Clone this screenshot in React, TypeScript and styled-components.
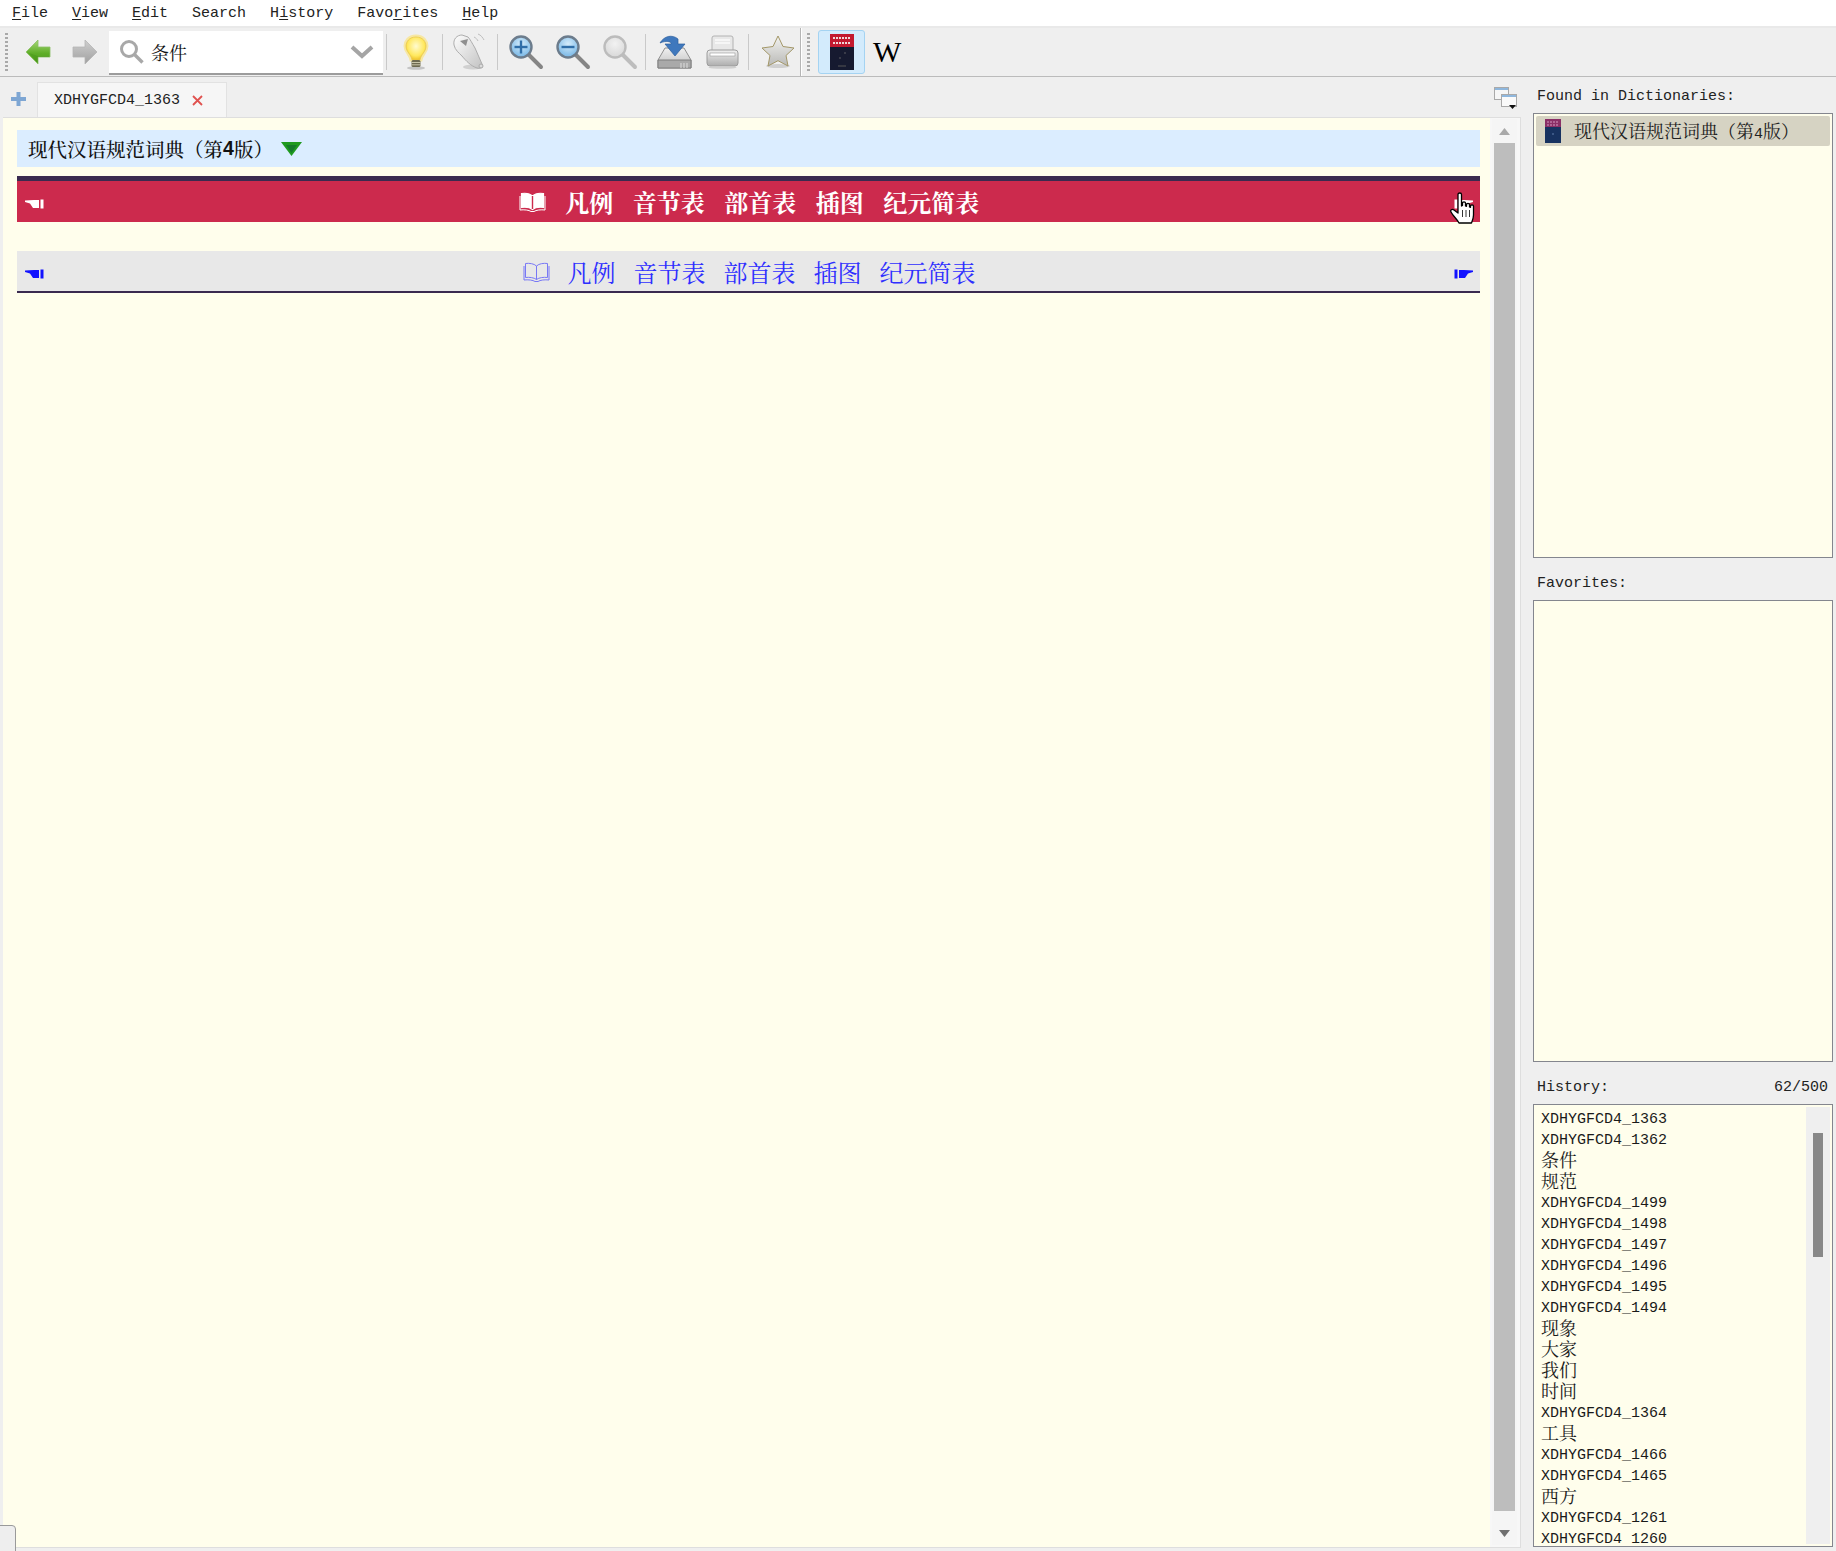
import React from "react";
import styled, { createGlobalStyle } from "styled-components";

const CJK = `"Noto Serif CJK SC", "Noto Sans CJK SC", serif`;
const MONO = `"Liberation Mono", "Noto Sans CJK SC", monospace`;

const Global = createGlobalStyle`
  html, body { margin: 0; padding: 0; background: #efefef; }
  * { box-sizing: border-box; }
`;

const Page = styled.div`
  width: 1836px;
  height: 1551px;
  position: relative;
  overflow: hidden;
  display: flex;
  flex-direction: column;
  background: #efefef;
  font-family: ${MONO};
  font-size: 15px;
  color: #111;
`;

const MenuBar = styled.div`
  height: 28px;
  flex: none;
  display: flex;
  gap: 24px;
  padding: 5px 0 0 12px;
  background: #fff;
  border-bottom: 2px solid #e9e9e9;
  line-height: 18px;
  color: #222;
`;

const MenuItem = styled.span`
  u { text-underline-offset: 2px; }
`;

const Toolbar = styled.div`
  height: 49px;
  flex: none;
  display: flex;
  align-items: center;
  padding-left: 5px;
  border-bottom: 1px solid #bbb;
  background: #efefef;
`;

const Grip = styled.div<{ $ml?: number }>`
  width: 3px;
  height: 38px;
  flex: none;
  margin-left: ${(p) => p.$ml ?? 0}px;
  background: repeating-linear-gradient(to bottom, #a9a9a9 0 2px, transparent 2px 4px);
`;

const Slot = styled.div<{ $w: number; $ml: number }>`
  width: ${(p) => p.$w}px;
  margin-left: ${(p) => p.$ml}px;
  flex: none;
  display: flex;
  align-items: center;
  justify-content: center;
`;

const Sep = styled.div<{ $ml: number }>`
  width: 1px;
  height: 36px;
  flex: none;
  margin-left: ${(p) => p.$ml}px;
  background: #c9c9c9;
`;

const Break = styled.div<{ $ml: number }>`
  width: 2px;
  height: 48px;
  flex: none;
  margin-left: ${(p) => p.$ml}px;
  border-left: 1px solid #b5b5b5;
  background: #fff;
`;

const Combo = styled.div`
  width: 274px;
  height: 44px;
  flex: none;
  margin-left: 11px;
  margin-top: 1px;
  display: flex;
  align-items: center;
  padding: 0 9px 0 10px;
  background: #fff;
  border-bottom: 2px solid #9c9c9c;
`;

const ComboText = styled.span`
  flex: 1;
  margin-left: 7px;
  font-family: ${CJK};
  font-size: 18px;
  color: #111;
`;

const DictButton = styled.div`
  width: 47px;
  height: 44px;
  flex: none;
  margin-left: 8px;
  display: flex;
  align-items: center;
  justify-content: center;
  background: #d3ebfc;
  border: 1px solid #a4d3f2;
  border-radius: 3px;
`;

const WikiMark = styled.span`
  margin-left: 8px;
  width: 31px;
  flex: none;
  font-family: "Liberation Serif", serif;
  font-size: 30px;
  line-height: 44px;
  color: #000;
`;

const Body = styled.div`
  flex: 1;
  min-height: 0;
  display: flex;
`;

const LeftColumn = styled.div`
  width: 1521px;
  flex: none;
  display: flex;
  flex-direction: column;
`;

const TabRow = styled.div`
  height: 40px;
  flex: none;
  display: flex;
  align-items: flex-end;
  padding-left: 11px;
`;

const PlusSlot = styled.div`
  width: 15px;
  height: 35px;
  margin-right: 11px;
  display: flex;
  align-items: center;
  padding-bottom: 1px;
`;

const Tab = styled.div`
  width: 190px;
  height: 35px;
  display: flex;
  align-items: center;
  padding-left: 16px;
  background: #f6f6f6;
  border: 1px solid #e2e2e2;
  border-bottom: none;
  color: #222;
`;

const TabClose = styled.span`
  margin-left: 12px;
  display: flex;
`;

const TabSwitch = styled.div`
  margin-left: auto;
  margin-right: 4px;
  align-self: center;
  padding-top: 2px;
  display: flex;
`;

const Frame = styled.div`
  flex: 1;
  min-height: 0;
  margin: 0 0 3px 3px;
  display: flex;
  gap: 2px;
  padding-right: 3px;
  border: 1px solid #dedede;
  border-left: none;
  background: #f7f7f7;
`;

const Article = styled.div`
  flex: 1;
  min-width: 0;
  padding: 12px 10px 0 14px;
  background: #fffeec;
`;

const DictHead = styled.div`
  height: 37px;
  display: flex;
  align-items: center;
  padding-left: 11px;
  background: #dbedff;
  font-family: ${CJK};
  font-size: 19.5px;
  font-weight: 500;
  color: #111;
  b { font-family: "Liberation Sans", sans-serif; }
`;

const DictArrow = styled.span`
  margin-left: 8px;
  display: flex;
`;

const NavBar = styled.div<{ $kind: "red" | "gray" }>`
  position: relative;
  height: ${(p) => (p.$kind === "red" ? 46 : 42)}px;
  margin-top: ${(p) => (p.$kind === "red" ? 9 : 29)}px;
  display: flex;
  align-items: center;
  justify-content: space-between;
  padding: 0 7px 0 8px;
  font-family: ${CJK};
  background: ${(p) => (p.$kind === "red" ? "#cc2a4d" : "#e8e8e8")};
  color: ${(p) => (p.$kind === "red" ? "#fff" : "#2f2fff")};
  border-top: ${(p) => (p.$kind === "red" ? "5px solid #3a2a4f" : "none")};
  border-bottom: ${(p) => (p.$kind === "gray" ? "2px solid #3a2a4f" : "none")};
`;

const NavLinks = styled.div<{ $bold: boolean }>`
  display: flex;
  align-items: center;
  gap: ${(p) => (p.$bold ? 19.5 : 18)}px;
  font-size: 24px;
  font-weight: ${(p) => (p.$bold ? 700 : 400)};
  line-height: 32px;
  padding-top: ${(p) => (p.$bold ? 0 : 2)}px;
`;

const HandSlot = styled.span<{ $blue?: boolean }>`
  display: flex;
  margin-top: 5px;
  color: ${(p) => (p.$blue ? "#1212ff" : "inherit")};
`;

const Cursor = styled.span`
  position: absolute;
  right: 5px;
  top: 11px;
  display: flex;
`;

const ScrollTrack = styled.div`
  width: 25px;
  flex: none;
  margin-top: 1px;
  margin-bottom: 2px;
  display: flex;
  flex-direction: column;
  align-items: center;
  background: #f5f5f5;
`;

const ArrowCell = styled.div`
  height: 24px;
  flex: none;
  display: flex;
  align-items: center;
  justify-content: center;
`;

const ScrollThumb = styled.div`
  flex: 1;
  width: 21px;
  margin-bottom: 10px;
  background: #bdbdbd;
`;

const RightColumn = styled.div`
  width: 300px;
  flex: none;
  margin-left: 12px;
  display: flex;
  flex-direction: column;
`;

const PanelLabel = styled.div<{ $h: number; $top: number }>`
  height: ${(p) => p.$h}px;
  flex: none;
  padding: ${(p) => p.$top}px 5px 0 4px;
  display: flex;
  align-items: center;
  justify-content: space-between;
  color: #222;
`;

const ListBox = styled.div<{ $h: number }>`
  height: ${(p) => p.$h}px;
  flex: none;
  position: relative;
  border: 1px solid #84868e;
  background: #fffeec;
  padding: 2px;
  display: flex;
`;

const FoundRow = styled.div`
  width: 100%;
  height: 30px;
  display: flex;
  align-items: center;
  padding-left: 9px;
  background: #d6d3c3;
  border-radius: 2px;
  font-family: ${CJK};
  font-size: 18px;
  color: #222;
  span { font-family: ${MONO}; font-size: 15px; }
`;

const FoundText = styled.div`
  margin-left: 13px;
  margin-top: -3px;
  white-space: nowrap;
`;

const HistoryRows = styled.div`
  flex: 1;
  min-width: 0;
  overflow: hidden;
  padding: 2px 0 0 5px;
`;

const HistoryRow = styled.div`
  height: 21px;
  line-height: 21px;
  font-size: 15px;
  color: #1a1a1a;
  white-space: nowrap;
  font-family: ${MONO};
`;

const HistoryCjk = styled(HistoryRow)`
  font-family: ${CJK};
  font-size: 18px;
  line-height: 17px;
`;

const ListScroll = styled.div`
  width: 24px;
  flex: none;
  padding: 26px 7px 0;
  background: #efefef;
`;

const ListThumb = styled.div`
  height: 124px;
  background: #888;
`;

const Corner = styled.div`
  position: absolute;
  left: -4px;
  bottom: -4px;
  width: 20px;
  height: 30px;
  border: 1px solid #9a9a9a;
  border-radius: 4px;
  background: #eeeeee;
`;

const Back = () => (
  <svg width="26" height="26" viewBox="0 0 26 26">
    <defs>
      <linearGradient id="backG" x1="0" y1="0" x2="0" y2="1">
        <stop offset="0" stopColor="#a8d878" />
        <stop offset="0.55" stopColor="#5fae28" />
        <stop offset="1" stopColor="#4d9a1c" />
      </linearGradient>
    </defs>
    <path d="M1 13 13 1v7h12v10H13v7z" fill="url(#backG)" stroke="#8cbf66" strokeWidth="0.8" />
    <path d="M13 17h11v1H13v6L4 14z" fill="#3f8f14" opacity="0.35" />
  </svg>
);

const Forward = () => (
  <svg width="26" height="26" viewBox="0 0 26 26">
    <defs>
      <linearGradient id="fwdG" x1="0" y1="0" x2="0" y2="1">
        <stop offset="0" stopColor="#cfcfcf" />
        <stop offset="1" stopColor="#a0a0a0" />
      </linearGradient>
    </defs>
    <path d="M25 13 13 1v7H1v10h12v7z" fill="url(#fwdG)" stroke="#b5b5b5" strokeWidth="0.8" />
  </svg>
);

const SearchGlass = () => (
  <svg width="25" height="25" viewBox="0 0 25 25" fill="none" stroke="#a8a8a8">
    <circle cx="10" cy="10" r="7.5" strokeWidth="3" />
    <path d="M15.5 15.5 23.5 23.5" strokeWidth="3.4" />
  </svg>
);

const Chevron = () => (
  <svg width="24" height="15" viewBox="0 0 24 15" fill="none">
    <path d="M2 3 12 12 22 3" stroke="#a5a5a5" strokeWidth="4" />
  </svg>
);

const Bulb = () => (
  <svg width="30" height="36" viewBox="0 0 30 36">
    <defs>
      <radialGradient id="bulbG" cx="0.5" cy="0.4" r="0.6">
        <stop offset="0" stopColor="#fffbd0" />
        <stop offset="0.7" stopColor="#ffe85e" />
        <stop offset="1" stopColor="#efc22a" />
      </radialGradient>
    </defs>
    <ellipse cx="15" cy="34" rx="9" ry="1.8" fill="#c4c4c4" />
    <path d="M15 2C7 2 4 8 4 12c0 6 5 8 6 14h10c1-6 6-8 6-14 0-4-3-10-11-10z" fill="#fff2b0" stroke="#f7e7a2" strokeWidth="3" />
    <path d="M15 3C8 3 5 8 5 12c0 6 5 8 6 14h8c1-6 6-8 6-14 0-4-3-9-10-9z" fill="url(#bulbG)" stroke="#e9c94f" strokeWidth="0.8" />
    <rect x="10.500" y="26" width="9" height="7" rx="1.500" fill="#6e6a50" />
    <path d="M10.500 28.500h9M10.500 30.800h9" stroke="#c9c5a8" />
  </svg>
);

const Whistle = () => (
  <svg width="33" height="38" viewBox="0 0 33 38">
    <defs>
      <linearGradient id="whisG" x1="0" y1="0" x2="1" y2="1">
        <stop offset="0" stopColor="#fdfdfd" />
        <stop offset="1" stopColor="#c2c2c2" />
      </linearGradient>
    </defs>
    <ellipse cx="20" cy="34" rx="10" ry="2.500" fill="#d0d0d0" />
    <path d="M1 12C0 6 4 2 9 2l6 2c2 2 4 6 7 11l7 16c1 3-2 5-5 4-6-2-11-7-15-12-3-3-7-6-8-11z" fill="url(#whisG)" stroke="#adadad" />
    <path d="M7 8l8-2-2 7z" fill="#8f8f8f" />
    <path d="M21 4c2 1 3 2 4 4M25 1c3 1 5 4 6 6" fill="none" stroke="#bdbdbd" />
    <circle cx="28" cy="33" r="2" fill="#dcdcdc" stroke="#aaa" />
  </svg>
);

const Magnifier = ({ mark, off }: { mark?: "plus" | "minus"; off?: boolean }) => {
  const id = `lens${mark ?? "none"}`;
  return (
    <svg width="36" height="36" viewBox="0 0 36 36">
      <defs>
        <radialGradient id={id} cx="0.5" cy="0.35" r="0.7">
          <stop offset="0" stopColor={off ? "#f2f2f2" : "#d4ecfb"} />
          <stop offset="1" stopColor={off ? "#d6d6d6" : "#6fb2e4"} />
        </radialGradient>
      </defs>
      <path d="M21 21 33 33" stroke={off ? "#bdbdbd" : "#858585"} strokeWidth="4" strokeLinecap="round" />
      <circle cx="13" cy="13" r="10.500" fill={`url(#${id})`} stroke={off ? "#bcbcbc" : "#6c7c8c"} strokeWidth="2.400" />
      {mark && <path d="M6.500 13h13" stroke="#2f6ea8" strokeWidth="2.400" />}
      {mark === "plus" && <path d="M13 6.500v13" stroke="#2f6ea8" strokeWidth="2.400" />}
    </svg>
  );
};

const SaveDisk = () => (
  <svg width="35" height="36" viewBox="0 0 35 36">
    <defs>
      <linearGradient id="diskG" x1="0" y1="0" x2="0" y2="1">
        <stop offset="0" stopColor="#f0f0f0" />
        <stop offset="1" stopColor="#bdbdbd" />
      </linearGradient>
    </defs>
    <path d="M8 14h19l7 12v8H1v-8z" fill="url(#diskG)" stroke="#8f8f8f" />
    <path d="M1 26h33v8H1z" fill="#a9a9a9" stroke="#7f7f7f" />
    <path d="M24 34v-5M27 34v-5M30 34v-5" stroke="#dedede" />
    <path d="M3 9C7 2 15 0 21 5v5h7L18 22 8 10h6c1-2-4-4-11-1z" fill="#3f78bd" stroke="#2d5f9e" strokeWidth="0.7" />
  </svg>
);

const Printer = () => (
  <svg width="33" height="34" viewBox="0 0 33 34">
    <defs>
      <linearGradient id="prnG" x1="0" y1="0" x2="0" y2="1">
        <stop offset="0" stopColor="#f1f1f1" />
        <stop offset="1" stopColor="#adadad" />
      </linearGradient>
    </defs>
    <rect x="6" y="1" width="21" height="17" rx="2" fill="#e8e8e8" stroke="#b2b2b2" />
    <path d="M9 5h15M9 8h15" stroke="#fafafa" strokeWidth="1.500" />
    <rect x="1" y="15" width="31" height="16" rx="3" fill="url(#prnG)" stroke="#9c9c9c" />
    <rect x="4" y="18" width="25" height="3" fill="#fff" stroke="#9a9a9a" strokeWidth="0.6" />
    <ellipse cx="16.500" cy="32.500" rx="14" ry="1.300" fill="#cfcfcf" />
  </svg>
);

const Star = () => (
  <svg width="34" height="34" viewBox="0 0 34 34">
    <defs>
      <linearGradient id="starG" x1="0" y1="0" x2="0" y2="1">
        <stop offset="0" stopColor="#f3f3f1" />
        <stop offset="1" stopColor="#b9b9b6" />
      </linearGradient>
    </defs>
    <ellipse cx="17" cy="31" rx="12" ry="2" fill="#cfcfcf" />
    <path d="M17 1l5 10.500 11 1.500-8 7.500 2 10.500-10-5.300-10 5.300 2-10.500-8-7.500 11-1.500z" fill="url(#starG)" stroke="#a39768" />
  </svg>
);

const BookCover = () => (
  <svg width="24" height="36" viewBox="0 0 24 36">
    <rect width="24" height="36" fill="#161a30" />
    <rect width="24" height="13" fill="#c2192f" />
    <path d="M3 4h18M3 9h18" stroke="#f0d8d8" strokeWidth="2" strokeDasharray="2 1" />
    <path d="M8 32h8" stroke="#555" />
    <circle cx="15" cy="19" r="0.700" fill="#777" />
    <circle cx="10" cy="24" r="0.700" fill="#777" />
  </svg>
);

const TinyCover = () => (
  <svg width="16" height="24" viewBox="0 0 16 24" style={{ flex: "none" }}>
    <rect width="16" height="24" fill="#173260" />
    <rect width="16" height="8" fill="#8a2f66" />
    <path d="M2 3h12M2 6h12" stroke="#d39ac0" strokeDasharray="2 1" />
    <circle cx="8" cy="15" r="0.800" fill="#6c87b3" />
  </svg>
);

const Plus = () => (
  <svg width="15" height="14" viewBox="0 0 15 14">
    <path d="M5.500 0h4v5h5.500v4H9.500v5h-4V9H0V5h5.500z" fill="#7ea6d3" />
  </svg>
);

const CloseX = () => (
  <svg width="11" height="11" viewBox="0 0 11 11">
    <path d="M1 1l9 9M10 1l-9 9" stroke="#e0524f" strokeWidth="1.800" />
  </svg>
);

const TabWindows = () => (
  <svg width="23" height="22" viewBox="0 0 23 22">
    <rect x="0.500" y="0.500" width="14" height="12" fill="#f6f6f6" stroke="#a9a9a9" />
    <rect x="1" y="1" width="13" height="2" fill="#8fb7dd" />
    <rect x="7.500" y="7.500" width="15" height="12" fill="#fafafa" stroke="#a9a9a9" />
    <rect x="8" y="8" width="14" height="2" fill="#8fb7dd" />
    <path d="M15 18h7l-3.500 4z" fill="#111" />
  </svg>
);

const GreenArrow = () => (
  <svg width="21" height="14" viewBox="0 0 21 14">
    <path d="M0 0h21L10.500 14z" fill="#1f9a1f" />
    <path d="M5 3h11l-5.500 8z" fill="#157a2a" />
  </svg>
);

const OpenBook = ({ thin }: { thin?: boolean }) => (
  <svg width="27" height="20" viewBox="0 0 27 20" fill="none" stroke="currentColor" style={{ opacity: thin ? 0.6 : 1 }}>
    <path
      d="M13.500 4C11 1.500 6 1 2.500 1.500v14C6 15 11 15.500 13.500 17.500 16 15.500 21 15 24.500 15.500v-14C21 1 16 1.500 13.500 4zM13.500 4v13.500"
      fill={thin ? "none" : "currentColor"}
      strokeWidth={thin ? 1 : 1.200}
    />
    {!thin && <path d="M13.500 4v13" stroke="#cc2a4d" strokeWidth="1.400" />}
    <path d="M1 4v14c4-.5 9 0 11 1.500h3c2-1.500 7-2 11-1.500V4" strokeWidth="1" />
  </svg>
);

const PointLeft = () => (
  <svg width="19" height="10" viewBox="0 0 19 10" fill="currentColor">
    <path d="M0 1.500 9 1h5v8H8L5 4.500 0 3zM15.500 0.500h3v9h-3z" />
  </svg>
);

const PointRight = () => (
  <svg width="19" height="10" viewBox="0 0 19 10" fill="currentColor">
    <path d="M19 1.500 10 1H5v8h6l3-4.500L19 3zM0.500 0.500h3v9h-3z" />
  </svg>
);

const HandCursor = () => (
  <svg width="25" height="33" viewBox="0 0 25 33">
    <path
      d="M8 2.500C8 .5 11.500.5 11.500 2.500V14l1-.5V11c0-1.500 3-1.500 3 0v3l1 .3V12.500c0-1.500 3-1.500 3 0v2.500l1 .3V14c0-1.500 3-1.500 3 0v9c0 3-1 5-2 8H9C7 27 3 24 1 20c-1-2 1-3.500 3-2l4 3z"
      fill="#fff"
      stroke="#000"
      strokeWidth="1.300"
      strokeLinejoin="round"
    />
    <path d="M12.500 18v7M16 18v7M19.500 18v7" stroke="#000" strokeWidth="0.800" />
  </svg>
);

const UpArrow = () => (
  <svg width="11" height="7" viewBox="0 0 11 7">
    <path d="M5.500 0 11 7H0z" fill="#a9a9a9" />
  </svg>
);

const DownArrow = () => (
  <svg width="11" height="7" viewBox="0 0 11 7">
    <path d="M5.500 7 11 0H0z" fill="#6f6f6f" />
  </svg>
);

const navLinks = ["凡例", "音节表", "部首表", "插图", "纪元简表"];

const historyItems = [
  "XDHYGFCD4_1363", "XDHYGFCD4_1362", "条件", "规范", "XDHYGFCD4_1499", "XDHYGFCD4_1498",
  "XDHYGFCD4_1497", "XDHYGFCD4_1496", "XDHYGFCD4_1495", "XDHYGFCD4_1494", "现象", "大家",
  "我们", "时间", "XDHYGFCD4_1364", "工具", "XDHYGFCD4_1466", "XDHYGFCD4_1465", "西方",
  "XDHYGFCD4_1261", "XDHYGFCD4_1260",
];

export default function App() {
  return (
    <Page>
      <Global />
      <MenuBar>
        <MenuItem><u>F</u>ile</MenuItem>
        <MenuItem><u>V</u>iew</MenuItem>
        <MenuItem><u>E</u>dit</MenuItem>
        <MenuItem>Search</MenuItem>
        <MenuItem>H<u>i</u>story</MenuItem>
        <MenuItem>Favo<u>r</u>ites</MenuItem>
        <MenuItem><u>H</u>elp</MenuItem>
      </MenuBar>
      <Toolbar>
        <Grip />
        <Slot $w={26} $ml={17}><Back /></Slot>
        <Slot $w={26} $ml={21}><Forward /></Slot>
        <Combo>
          <SearchGlass />
          <ComboText>条件</ComboText>
          <Chevron />
        </Combo>
        <Sep $ml={3} />
        <Slot $w={30} $ml={14}><Bulb /></Slot>
        <Sep $ml={11} />
        <Slot $w={33} $ml={10}><Whistle /></Slot>
        <Sep $ml={11} />
        <Slot $w={36} $ml={10}><Magnifier mark="plus" /></Slot>
        <Slot $w={36} $ml={11}><Magnifier mark="minus" /></Slot>
        <Slot $w={36} $ml={11}><Magnifier off /></Slot>
        <Sep $ml={7} />
        <Slot $w={35} $ml={11}><SaveDisk /></Slot>
        <Slot $w={33} $ml={14}><Printer /></Slot>
        <Sep $ml={9} />
        <Slot $w={34} $ml={12}><Star /></Slot>
        <Break $ml={5} />
        <Grip $ml={5} />
        <DictButton><BookCover /></DictButton>
        <WikiMark>W</WikiMark>
      </Toolbar>
      <Body>
        <LeftColumn>
          <TabRow>
            <PlusSlot><Plus /></PlusSlot>
            <Tab>
              XDHYGFCD4_1363
              <TabClose><CloseX /></TabClose>
            </Tab>
            <TabSwitch><TabWindows /></TabSwitch>
          </TabRow>
          <Frame>
            <Article>
              <DictHead>
                现代汉语规范词典（第<b>4</b>版）
                <DictArrow><GreenArrow /></DictArrow>
              </DictHead>
              <NavBar $kind="red">
                <HandSlot><PointLeft /></HandSlot>
                <NavLinks $bold>
                  <OpenBook />
                  {navLinks.map((t) => <span key={t}>{t}</span>)}
                </NavLinks>
                <HandSlot><PointRight /></HandSlot>
                <Cursor><HandCursor /></Cursor>
              </NavBar>
              <NavBar $kind="gray">
                <HandSlot $blue><PointLeft /></HandSlot>
                <NavLinks $bold={false}>
                  <OpenBook thin />
                  {navLinks.map((t) => <span key={t}>{t}</span>)}
                </NavLinks>
                <HandSlot $blue><PointRight /></HandSlot>
              </NavBar>
            </Article>
            <ScrollTrack>
              <ArrowCell><UpArrow /></ArrowCell>
              <ScrollThumb />
              <ArrowCell><DownArrow /></ArrowCell>
            </ScrollTrack>
          </Frame>
        </LeftColumn>
        <RightColumn>
          <PanelLabel $h={36} $top={2}>Found in Dictionaries:</PanelLabel>
          <ListBox $h={445}>
            <FoundRow>
              <TinyCover />
              <FoundText>现代汉语规范词典（第<span>4</span>版）</FoundText>
            </FoundRow>
          </ListBox>
          <PanelLabel $h={42} $top={8}>Favorites:</PanelLabel>
          <ListBox $h={462} />
          <PanelLabel $h={42} $top={8}>
            <span>History:</span>
            <span>62/500</span>
          </PanelLabel>
          <ListBox $h={443}>
            <HistoryRows>
              {historyItems.map((t, i) =>
                t.startsWith("X") ? (
                  <HistoryRow key={i}>{t}</HistoryRow>
                ) : (
                  <HistoryCjk key={i}>{t}</HistoryCjk>
                ),
              )}
            </HistoryRows>
            <ListScroll><ListThumb /></ListScroll>
          </ListBox>
        </RightColumn>
      </Body>
      <Corner />
    </Page>
  );
}
